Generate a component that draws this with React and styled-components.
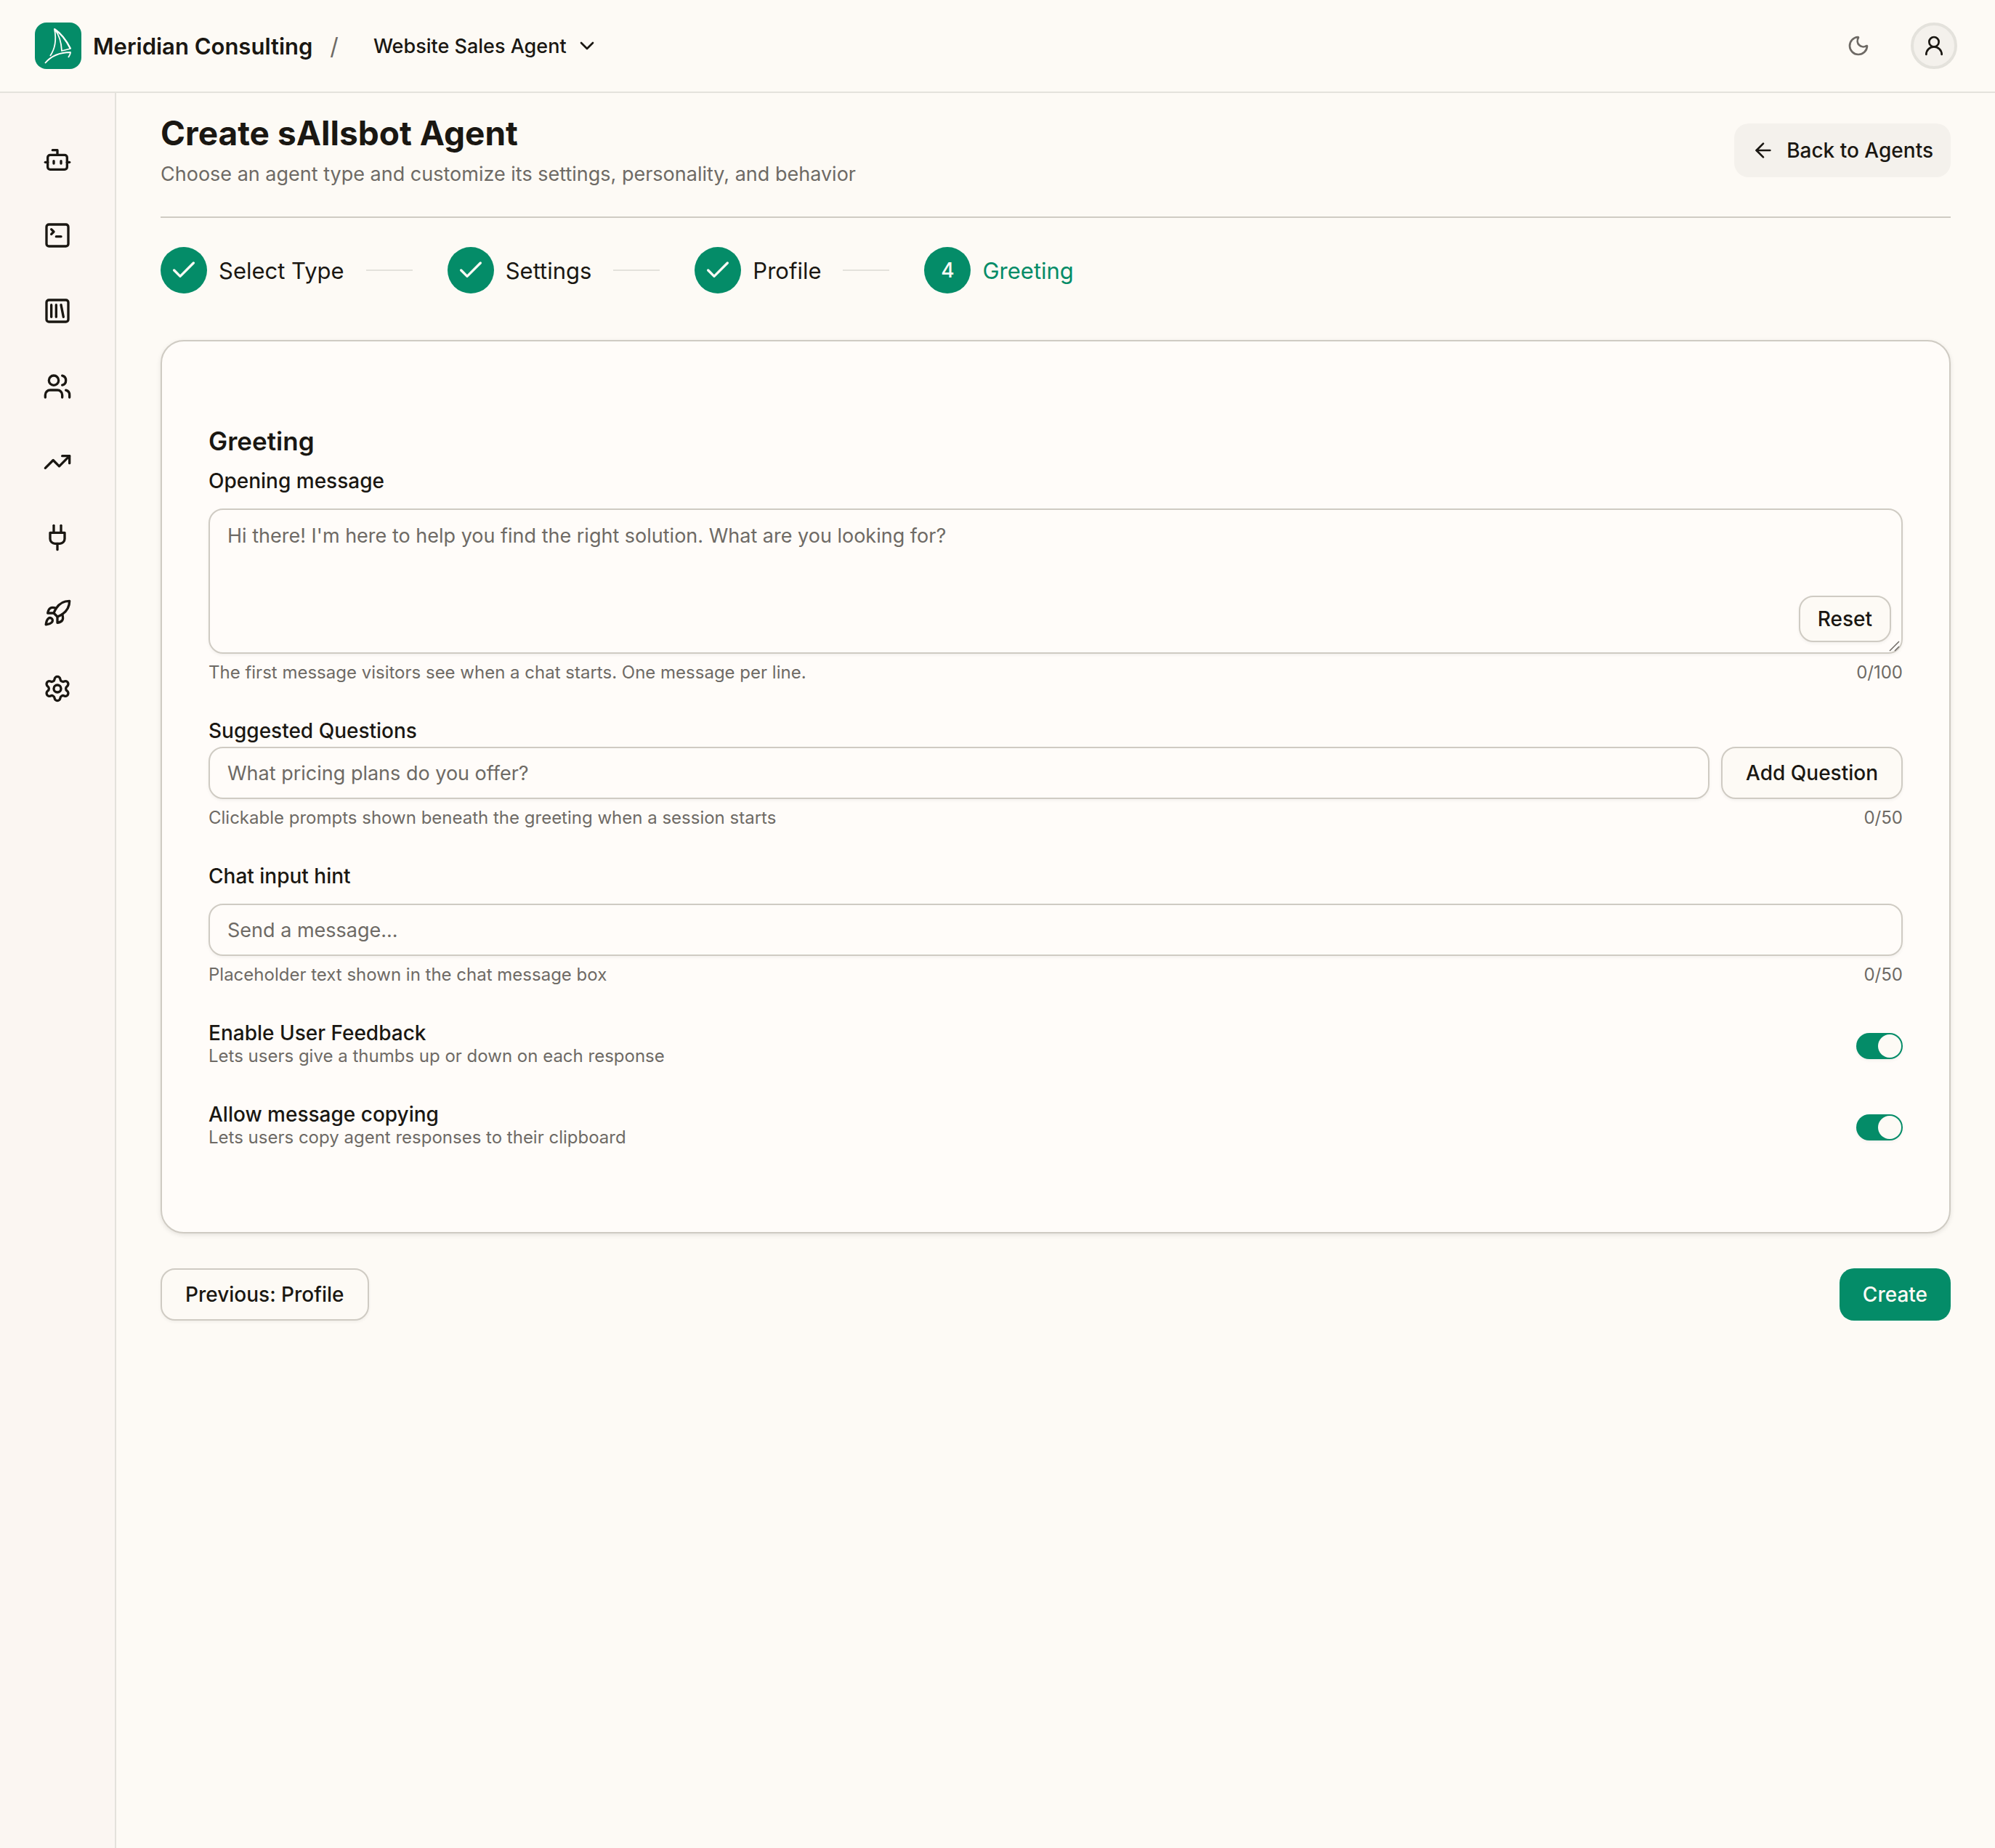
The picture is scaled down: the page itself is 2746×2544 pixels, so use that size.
import React, { useState } from 'react'
import styled, { createGlobalStyle, css } from 'styled-components'
import {
  ArrowLeft,
  Bot,
  Check,
  ChevronDown,
  Moon,
  Settings,
  SquareLibrary,
  SquareTerminal,
  TrendingUp,
  UserRound,
  Users
} from 'lucide-react'

const color = {
  page: '#fdfaf5',
  card: '#fffcf9',
  sidebar: '#fbf6f2',
  muted: '#f4f1ec',
  line: '#e4e2dc',
  border: '#cfcbc3',
  text: '#1a1712',
  dim: '#6e6a65',
  green: '#048c68'
}

const GlobalStyle = createGlobalStyle`
  *, *::before, *::after {
    box-sizing: border-box;
  }
  body {
    margin: 0;
    background: ${color.page};
    color: ${color.text};
    font-family: Inter, 'Liberation Sans', sans-serif;
    font-size: 28px;
  }
  button, input, textarea, select {
    font: inherit;
    color: inherit;
  }
  h1, h2, p, ol, ul {
    margin: 0;
    padding: 0;
  }
  ol, ul {
    list-style: none;
  }
`

const Page = styled.div`
  min-height: 100vh;
  display: flex;
  flex-direction: column;
`

const Topbar = styled.header`
  display: flex;
  align-items: center;
  justify-content: space-between;
  height: 128px;
  padding: 0 52px 0 48px;
  border-bottom: 2px solid ${color.line};
`

const Brand = styled.div`
  display: flex;
  align-items: center;
  gap: 16px;
`

const Logo = styled.svg`
  width: 64px;
  height: 64px;
  border-radius: 16px;
  background: ${color.green};
`

const OrgName = styled.span`
  font-size: 31px;
  font-weight: 600;
`

const Slash = styled.span`
  margin: 0 24px 0 8px;
  padding-right: 8px;
  font-size: 32px;
  color: ${color.dim};
`

const AgentPicker = styled.div`
  position: relative;
  display: flex;
  align-items: center;

  svg {
    position: absolute;
    right: 0;
    pointer-events: none;
  }
`

const AgentSelect = styled.select`
  appearance: none;
  border: 0;
  padding: 0 44px 0 0;
  background: transparent;
  font-size: 27px;
  font-weight: 500;
`

const TopActions = styled.div`
  display: flex;
  align-items: center;
  gap: 40px;
`

const IconButton = styled.button`
  display: flex;
  align-items: center;
  justify-content: center;
  width: 64px;
  height: 64px;
  padding: 0;
  border: 0;
  border-radius: 50%;
  background: transparent;
  color: ${color.dim};
`

const Avatar = styled(IconButton)`
  border: 4px solid ${color.line};
  background: ${color.muted};
  color: ${color.text};
`

const Body = styled.div`
  flex: 1;
  display: flex;
`

const Sidebar = styled.nav`
  flex: none;
  width: 160px;
  padding-top: 40px;
  border-right: 2px solid ${color.line};
  background: ${color.sidebar};
`

const NavLink = styled.a`
  display: flex;
  align-items: center;
  justify-content: center;
  height: 104px;
  color: ${color.text};
`

const Main = styled.main`
  flex: 1;
  min-width: 0;
  padding: 24px 61px;
`

const PageHead = styled.div`
  display: flex;
  align-items: center;
  justify-content: space-between;
  padding-bottom: 36px;
  border-bottom: 2px solid ${color.border};
`

const Title = styled.h1`
  font-size: 46px;
  line-height: 62px;
  font-weight: 700;
`

const Subtitle = styled.p`
  margin-top: 4px;
  font-size: 27px;
  line-height: 44px;
  color: ${color.dim};
`

const outline = css`
  border: 2px solid ${color.border};
  background: ${color.page};
  box-shadow: 0 2px 4px rgba(0, 0, 0, 0.05);
`

const Button = styled.button`
  flex: none;
  height: ${(props) => (props.$small ? '64px' : '72px')};
  padding: 0 ${(props) => (props.$small ? '24px' : '32px')};
  border: 0;
  border-radius: 20px;
  font-size: 28px;
  font-weight: 500;
  background: ${color.green};
  color: ${color.page};
  ${(props) =>
    props.$outline &&
    css`
      ${outline}
      color: ${color.text};
    `}
`

const BackLink = styled.a`
  display: flex;
  align-items: center;
  gap: 16px;
  height: 74px;
  padding: 0 24px;
  border-radius: 20px;
  background: ${color.muted};
  color: ${color.text};
  font-size: 28px;
  font-weight: 500;
  text-decoration: none;
`

const Steps = styled.ol`
  display: flex;
  gap: 48px;
  padding: 40px 0 64px;
`

const Step = styled.li`
  display: flex;
  align-items: center;
  gap: 16px;
  font-size: 31px;
  color: ${(props) => (props.$current ? color.green : color.text)};

  &:not(:last-child)::after {
    content: '';
    width: 64px;
    height: 2px;
    margin-left: 14px;
    background: ${color.line};
  }
`

const StepMark = styled.span`
  display: flex;
  align-items: center;
  justify-content: center;
  width: 64px;
  height: 64px;
  border-radius: 50%;
  background: ${color.green};
  color: ${color.page};
  font-size: 28px;
  font-weight: 500;
`

const Card = styled.section`
  padding: 112px 64px;
  border: 2px solid ${color.border};
  border-radius: 32px;
  background: ${color.card};
  box-shadow: 0 2px 6px rgba(0, 0, 0, 0.1);
`

const CardTitle = styled.h2`
  margin-bottom: 16px;
  font-size: 35px;
  line-height: 50px;
  font-weight: 600;
`

const Fields = styled.div`
  display: flex;
  flex-direction: column;
  gap: 48px;
`

const Label = styled.label`
  display: block;
  font-size: 28px;
  line-height: 28px;
  font-weight: 500;
`

const Control = styled.div`
  position: relative;
  display: flex;
  gap: 16px;
  margin: ${(props) => (props.$tight ? '8px' : '24px')} 0 8px;
`

const field = css`
  flex: 1;
  min-width: 0;
  border: 2px solid ${color.border};
  border-radius: 20px;
  background: transparent;
  box-shadow: 0 2px 4px rgba(0, 0, 0, 0.05);
  font-size: 27px;

  &::placeholder {
    color: ${color.dim};
    opacity: 1;
  }
`

const Input = styled.input`
  ${field}
  height: 72px;
  padding: 0 24px;
`

const TextArea = styled.textarea`
  ${field}
  height: 200px;
  padding: 16px 24px;
  line-height: 40px;
  resize: none;
`

const ResetButton = styled(Button)`
  position: absolute;
  right: 16px;
  bottom: 16px;
`

const Grip = styled.svg`
  position: absolute;
  right: 2px;
  bottom: 2px;
  width: 18px;
  height: 18px;
  pointer-events: none;
`

const Hint = styled.div`
  display: flex;
  justify-content: space-between;
  font-size: 24px;
  line-height: 36px;
  color: ${color.dim};
`

const SwitchRow = styled.div`
  display: flex;
  align-items: center;
  justify-content: space-between;
`

const Switch = styled.input`
  appearance: none;
  width: 64px;
  height: 36px;
  margin: 0;
  padding: 2px;
  border-radius: 18px;
  background: ${color.border};
  box-shadow: 0 2px 4px rgba(0, 0, 0, 0.05);

  &::before {
    content: '';
    display: block;
    width: 32px;
    height: 32px;
    border-radius: 50%;
    background: ${color.page};
  }
  &:checked {
    background: ${color.green};
  }
  &:checked::before {
    margin-left: auto;
  }
`

const Footer = styled.div`
  display: flex;
  justify-content: space-between;
  margin-top: 48px;
`

const StrokeIcon = ({ size, children }) => (
  <svg
    width={size}
    height={size}
    viewBox="0 0 24 24"
    fill="none"
    stroke="currentColor"
    strokeWidth="2"
    strokeLinecap="round"
    strokeLinejoin="round"
  >
    {children}
  </svg>
)

const Plug = ({ size }) => (
  <StrokeIcon size={size}>
    <path d="M12 22v-5" />
    <path d="M9 8V2" />
    <path d="M15 8V2" />
    <path d="M18 8v5a4 4 0 0 1-4 4h-4a4 4 0 0 1-4-4V8Z" />
  </StrokeIcon>
)

const Rocket = ({ size }) => (
  <StrokeIcon size={size}>
    <path d="M4.5 16.5c-1.5 1.26-2 5-2 5s3.74-.5 5-2c.71-.84.7-2.13-.09-2.91a2.18 2.18 0 0 0-2.91-.09z" />
    <path d="m12 15-3-3a22 22 0 0 1 2-3.95A12.88 12.88 0 0 1 22 2c0 2.72-.78 7.5-6 11a22.35 22.35 0 0 1-4 2z" />
    <path d="M9 12H4s.55-3.03 2-4c1.62-1.08 5 0 5 0" />
    <path d="M12 15v5s3.03-.55 4-2c1.08-1.62 0-5 0-5" />
  </StrokeIcon>
)

const navItems = [
  { label: 'Agents', icon: Bot },
  { label: 'Playground', icon: SquareTerminal },
  { label: 'Library', icon: SquareLibrary },
  { label: 'Contacts', icon: Users },
  { label: 'Analytics', icon: TrendingUp },
  { label: 'Integrations', icon: Plug },
  { label: 'Deploy', icon: Rocket },
  { label: 'Settings', icon: Settings }
]

const steps = ['Select Type', 'Settings', 'Profile', 'Greeting']
const currentStep = 3

const SailLogo = () => (
  <Logo viewBox="0 0 64 64" fill="none" stroke="#fffdfa" strokeLinejoin="round">
    <path d="M21 46C28 36 29.5 22 27 9C36 15 44 26 49 36L37 39C36.5 29 34 18 28 10" strokeWidth="1.8" />
    <path d="M14 56C24 44 36 41 49 41C49 43 48 45 46 48" strokeWidth="1.8" />
    <path d="M27 9C36 15 44 26 49 36" strokeWidth="2.2" />
  </Logo>
)

const Header = () => (
  <Topbar>
    <Brand>
      <SailLogo />
      <OrgName>Meridian Consulting</OrgName>
      <Slash>/</Slash>
      <AgentPicker>
        <AgentSelect aria-label="Agent">
          <option>Website Sales Agent</option>
        </AgentSelect>
        <ChevronDown size={32} />
      </AgentPicker>
    </Brand>
    <TopActions>
      <IconButton aria-label="Toggle theme">
        <Moon size={32} />
      </IconButton>
      <Avatar aria-label="Account">
        <UserRound size={32} />
      </Avatar>
    </TopActions>
  </Topbar>
)

const SwitchField = ({ id, label, hint }) => (
  <SwitchRow>
    <div>
      <Label htmlFor={id}>{label}</Label>
      <Hint>{hint}</Hint>
    </div>
    <Switch id={id} type="checkbox" role="switch" defaultChecked />
  </SwitchRow>
)

const GreetingForm = () => {
  const [message, setMessage] = useState('')
  const [question, setQuestion] = useState('')
  const [placeholder, setPlaceholder] = useState('')

  return (
    <Card>
      <CardTitle>Greeting</CardTitle>
      <Fields>
        <div>
          <Label htmlFor="message">Opening message</Label>
          <Control>
            <TextArea
              id="message"
              maxLength={100}
              placeholder="Hi there! I'm here to help you find the right solution. What are you looking for?"
              value={message}
              onChange={(e) => setMessage(e.target.value)}
            />
            <ResetButton $small $outline onClick={() => setMessage('')}>
              Reset
            </ResetButton>
            <Grip viewBox="0 0 18 18" stroke={color.dim} strokeWidth="1.5">
              <path d="M2 16L15 3M9 16L15 10" />
            </Grip>
          </Control>
          <Hint>
            <span>The first message visitors see when a chat starts. One message per line.</span>
            <span>{message.length}/100</span>
          </Hint>
        </div>
        <div>
          <Label htmlFor="question">Suggested Questions</Label>
          <Control $tight>
            <Input
              id="question"
              maxLength={50}
              placeholder="What pricing plans do you offer?"
              value={question}
              onChange={(e) => setQuestion(e.target.value)}
            />
            <Button $outline>Add Question</Button>
          </Control>
          <Hint>
            <span>Clickable prompts shown beneath the greeting when a session starts</span>
            <span>{question.length}/50</span>
          </Hint>
        </div>
        <div>
          <Label htmlFor="placeholder">Chat input hint</Label>
          <Control>
            <Input
              id="placeholder"
              maxLength={50}
              placeholder="Send a message..."
              value={placeholder}
              onChange={(e) => setPlaceholder(e.target.value)}
            />
          </Control>
          <Hint>
            <span>Placeholder text shown in the chat message box</span>
            <span>{placeholder.length}/50</span>
          </Hint>
        </div>
        <SwitchField
          id="feedback"
          label="Enable User Feedback"
          hint="Lets users give a thumbs up or down on each response"
        />
        <SwitchField
          id="copying"
          label="Allow message copying"
          hint="Lets users copy agent responses to their clipboard"
        />
      </Fields>
    </Card>
  )
}

const App = () => (
  <Page>
    <GlobalStyle />
    <Header />
    <Body>
      <Sidebar>
        {navItems.map(({ label, icon: Icon }) => (
          <NavLink key={label} href="#" aria-label={label}>
            <Icon size={40} />
          </NavLink>
        ))}
      </Sidebar>
      <Main>
        <PageHead>
          <div>
            <Title>Create sAllsbot Agent</Title>
            <Subtitle>
              Choose an agent type and customize its settings, personality, and behavior
            </Subtitle>
          </div>
          <BackLink href="#">
            <ArrowLeft size={32} />
            Back to Agents
          </BackLink>
        </PageHead>
        <Steps>
          {steps.map((step, i) => (
            <Step key={step} $current={i === currentStep}>
              <StepMark>{i < currentStep ? <Check size={40} /> : i + 1}</StepMark>
              {step}
            </Step>
          ))}
        </Steps>
        <GreetingForm />
        <Footer>
          <Button $outline>Previous: Profile</Button>
          <Button>Create</Button>
        </Footer>
      </Main>
    </Body>
  </Page>
)

export default App
